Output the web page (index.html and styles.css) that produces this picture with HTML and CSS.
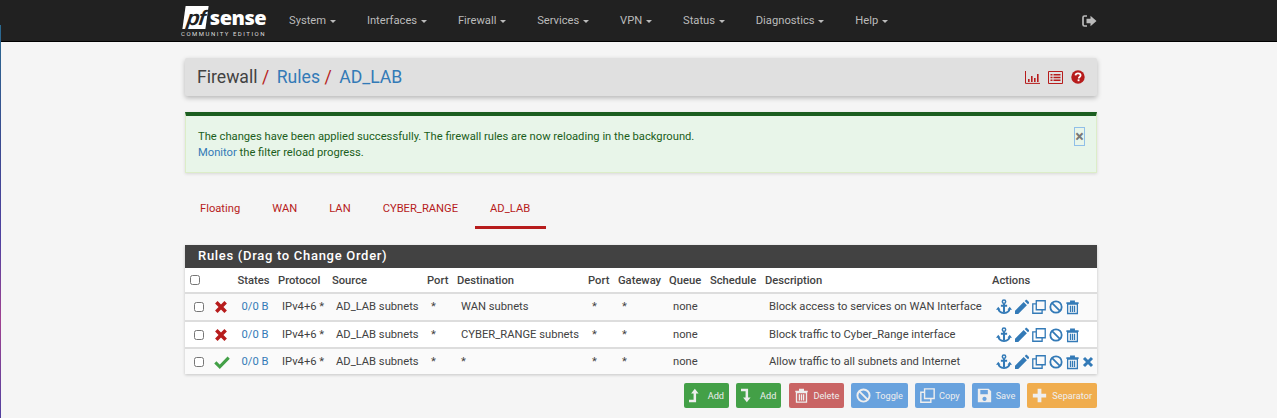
FILE: index.html
```html
<!DOCTYPE html>
<html>
<head>
    <title>pfSense - Firewall: Rules: AD_LAB</title>
    <link rel="stylesheet" href="styles.css">
</head>
<body>
<svg class="defs" width="0" height="0">
    <symbol id="i-anchor" viewBox="0 0 18 18">
        <circle cx="9" cy="3" r="1.9" fill="none" stroke="currentColor" stroke-width="1.7"/>
        <path d="M9 5v10M5.5 7.6h7" fill="none" stroke="currentColor" stroke-width="2.300"/>
        <path d="M2.6 10.6c.3 3.3 3 5 6.4 5.4 3.400-.4 6.100-2.100 6.400-5.400" fill="none" stroke="currentColor" stroke-width="2"/>
        <path d="M0 12l2.600-3.200L5 12zM13 12l2.400-3.200L18 12z" fill="currentColor"/>
    </symbol>
    <symbol id="i-pencil" viewBox="1 .5 16.500 16.500">
        <path d="M1 13.200L11.200 3l3.800 3.800L4.800 17H1zM12.400 1.800l1-1c.6-.6 1.400-.6 2 0l1.800 1.800c.6.6.6 1.400 0 2l-1 1z" fill="currentColor"/>
    </symbol>
    <symbol id="i-copy" viewBox="0 0 18 18">
        <path d="M5.500 1h11.500v11.500H5.500zM5 5H1v12h12v-4" fill="none" stroke="currentColor" stroke-width="1.700"/>
    </symbol>
    <symbol id="i-ban" viewBox="0 0 18 18">
        <circle cx="9" cy="9" r="7.300" fill="none" stroke="currentColor" stroke-width="2.300"/>
        <path d="M4 4l10 10" stroke="currentColor" stroke-width="2.300"/>
    </symbol>
    <symbol id="i-trash" viewBox="1 0 16 18">
        <path d="M1.500 3.200h4.500V1h6v2.200h4.500v2h-15z" fill="currentColor"/>
        <path d="M3 5.500h12V17H3zM6.500 7.500v7.500M9 7.500v7.500M11.500 7.500v7.500" fill="none" stroke="currentColor" stroke-width="1.600"/>
    </symbol>
    <symbol id="i-times" viewBox="0 0 18 18">
        <path d="M3 3l12 12M15 3L3 15" stroke="currentColor" stroke-width="4.500"/>
    </symbol>
    <symbol id="i-check" viewBox="0 0 18 18">
        <path d="M1.500 9.500l5 5L16.500 4" fill="none" stroke="currentColor" stroke-width="3.500"/>
    </symbol>
    <symbol id="i-save" viewBox="0 0 18 18">
        <path d="M1 1h13l3 3v13H1zM4 2.500v5h9v-5zM9 10.500a2.500 2.500 0 1 0 .01 0z" fill="currentColor" fill-rule="evenodd"/>
    </symbol>
    <symbol id="i-plus" viewBox="0 0 18 18">
        <path d="M9 1v16M1 9h16" stroke="currentColor" stroke-width="4.500"/>
    </symbol>
    <symbol id="i-up" viewBox="0 0 12 18">
        <path d="M7 1L2.500 6.500h3V14H0v3h8.500V6.500h3z" fill="currentColor"/>
    </symbol>
    <symbol id="i-down" viewBox="0 0 12 18">
        <path d="M7 17l-4.500-5.500h3V4H0V1h8.500v10.500h3z" fill="currentColor"/>
    </symbol>
</svg>

<div class="edge-strip"></div>

<nav class="navbar">
    <div class="nav-inner">
        <div class="brand">
            <div class="logo"><span class="logo-pf">pf</span><span class="logo-sense">sense</span></div>
            <div class="logo-sub">COMMUNITY EDITION</div>
        </div>
        <ul class="menu">
            <li>System <b class="caret"></b></li>
            <li>Interfaces <b class="caret"></b></li>
            <li>Firewall <b class="caret"></b></li>
            <li>Services <b class="caret"></b></li>
            <li>VPN <b class="caret"></b></li>
            <li>Status <b class="caret"></b></li>
            <li>Diagnostics <b class="caret"></b></li>
            <li>Help <b class="caret"></b></li>
        </ul>
        <svg class="logout" viewBox="0 0 15 12">
            <path d="M5 1H2.500C1.500 1 1 1.600 1 2.500v7c0 .9.500 1.500 1.500 1.500H5" fill="none" stroke="currentColor" stroke-width="1.700"/>
            <path d="M4.500 3.800H8.500V.8L14.500 6l-6 5.200v-3H4.500z" fill="currentColor"/>
        </svg>
    </div>
</nav>

<main class="page">
    <div class="page-header">
        <ol class="crumbs">
            <li>Firewall</li>
            <li class="sep">/</li>
            <li class="link">Rules</li>
            <li class="sep">/</li>
            <li class="link">AD_LAB</li>
        </ol>
        <div class="header-icons">
            <svg class="hicon" viewBox="0 0 15 13">
                <path d="M.5 0v12.400H15" fill="none" stroke="currentColor" stroke-width="1"/>
                <path d="M3 8h1.600v3H3zM6 5h1.600v6H6zM9 7h1.600v4H9zM12 3h1.600v8H12z" fill="currentColor"/>
            </svg>
            <svg class="hicon" viewBox="0 0 15 13">
                <path d="M.5.5h14v12H.5z" fill="none" stroke="currentColor" stroke-width="1"/>
                <path d="M2.500 3h2v1.400h-2zM5.500 3h7v1.400h-7zM2.500 5.800h2v1.400h-2zM5.500 5.800h7v1.400h-7zM2.500 8.600h2v1.400h-2zM5.500 8.600h7v1.400h-7z" fill="currentColor"/>
            </svg>
            <svg class="hicon help" viewBox="0 0 15 15">
                <circle cx="7.500" cy="7.500" r="7.200" fill="currentColor"/>
                <path d="M4.800 5.700c.2-1.500 1.300-2.200 2.700-2.200 1.600 0 2.800.9 2.800 2.200 0 1.900-2 1.800-2 3.300" fill="none" stroke="#fff" stroke-width="1.900"/>
                <path d="M7.100 10h2v2h-2z" fill="#fff"/>
            </svg>
        </div>
    </div>

    <div class="alert">
        <div class="alert-text">
            The changes have been applied successfully. The firewall rules are now reloading in the background.<br>
            <a class="link">Monitor</a> the filter reload progress.
        </div>
        <span class="alert-close">&times;</span>
    </div>

    <ul class="tabs">
        <li>Floating</li>
        <li>WAN</li>
        <li>LAN</li>
        <li>CYBER_RANGE</li>
        <li class="active">AD_LAB</li>
    </ul>

    <section class="panel">
        <h2 class="panel-title">Rules (Drag to Change Order)</h2>
        <table class="rules">
            <colgroup>
                <col class="c-check"><col class="c-mark"><col class="c-states"><col class="c-proto"><col class="c-src">
                <col class="c-port"><col class="c-dest"><col class="c-dport"><col class="c-gw"><col class="c-queue">
                <col class="c-sched"><col class="c-desc"><col>
            </colgroup>
            <thead>
                <tr>
                    <th><input type="checkbox"></th><th></th><th>States</th><th>Protocol</th><th>Source</th>
                    <th>Port</th><th>Destination</th><th>Port</th><th>Gateway</th><th>Queue</th>
                    <th>Schedule</th><th>Description</th><th>Actions</th>
                </tr>
            </thead>
            <tbody>
                <tr>
                    <td class="cb"><input type="checkbox"></td>
                    <td class="mark"><svg class="ic red"><use href="#i-times"/></svg></td>
                    <td><a class="link">0/0 B</a></td><td>IPv4+6 *</td><td>AD_LAB subnets</td><td>*</td>
                    <td>WAN subnets</td><td>*</td><td>*</td><td>none</td><td></td>
                    <td>Block access to services on WAN Interface</td>
                    <td class="actions">
                        <svg class="ic anchor"><use href="#i-anchor"/></svg><svg class="ic"><use href="#i-pencil"/></svg><svg class="ic"><use href="#i-copy"/></svg><svg class="ic"><use href="#i-ban"/></svg><svg class="ic trash"><use href="#i-trash"/></svg>
                    </td>
                </tr>
                <tr>
                    <td class="cb"><input type="checkbox"></td>
                    <td class="mark"><svg class="ic red"><use href="#i-times"/></svg></td>
                    <td><a class="link">0/0 B</a></td><td>IPv4+6 *</td><td>AD_LAB subnets</td><td>*</td>
                    <td>CYBER_RANGE subnets</td><td>*</td><td>*</td><td>none</td><td></td>
                    <td>Block traffic to Cyber_Range interface</td>
                    <td class="actions">
                        <svg class="ic anchor"><use href="#i-anchor"/></svg><svg class="ic"><use href="#i-pencil"/></svg><svg class="ic"><use href="#i-copy"/></svg><svg class="ic"><use href="#i-ban"/></svg><svg class="ic trash"><use href="#i-trash"/></svg>
                    </td>
                </tr>
                <tr>
                    <td class="cb"><input type="checkbox"></td>
                    <td class="mark"><svg class="ic green"><use href="#i-check"/></svg></td>
                    <td><a class="link">0/0 B</a></td><td>IPv4+6 *</td><td>AD_LAB subnets</td><td>*</td>
                    <td>*</td><td>*</td><td>*</td><td>none</td><td></td>
                    <td>Allow traffic to all subnets and Internet</td>
                    <td class="actions">
                        <svg class="ic anchor"><use href="#i-anchor"/></svg><svg class="ic"><use href="#i-pencil"/></svg><svg class="ic"><use href="#i-copy"/></svg><svg class="ic"><use href="#i-ban"/></svg><svg class="ic trash"><use href="#i-trash"/></svg><svg class="ic cross"><use href="#i-times"/></svg>
                    </td>
                </tr>
            </tbody>
        </table>
    </section>

    <div class="buttons">
        <button class="btn green-btn"><svg class="bi narrow"><use href="#i-up"/></svg>Add</button>
        <button class="btn green-btn add-last"><svg class="bi narrow"><use href="#i-down"/></svg>Add</button>
        <button class="btn red-btn"><svg class="bi"><use href="#i-trash"/></svg>Delete</button>
        <button class="btn blue-btn"><svg class="bi"><use href="#i-ban"/></svg>Toggle</button>
        <button class="btn blue-btn"><svg class="bi"><use href="#i-copy"/></svg>Copy</button>
        <button class="btn blue-btn"><svg class="bi"><use href="#i-save"/></svg>Save</button>
        <button class="btn orange-btn"><svg class="bi wide"><use href="#i-plus"/></svg>Separator</button>
    </div>
</main>
</body>
</html>
```

FILE: styles.css
```css
body {
    margin: 0;
    background-color: #f5f5f5;
    color: #424242;
    font-family: Roboto, "Liberation Sans", sans-serif;
    font-size: 11.2px;
    overflow: hidden;
}

.defs {
    display: block;
    height: 0;
}

.link {
    color: #337ab7;
}

/* sliver of the desktop behind the window */
.edge-strip {
    position: absolute;
    left: 0;
    top: 25px;
    bottom: 0;
    width: 1px;
    background: linear-gradient(#2a6a90, #3a4a90 30%, #5040a0 55%, #a04090 75%, #5040a0);
}

/* top bar */
.navbar {
    height: 41px;
    background-color: #212121;
    border-bottom: 1px solid #000;
}

.nav-inner {
    width: 912px;
    margin-left: 185px;
    display: flex;
    align-items: center;
    height: 41px;
}

.brand {
    width: 92.5px;
    margin-left: -4px;
    padding-top: 3px;
    color: #fff;
    flex-shrink: 0;
}

.logo {
    display: flex;
    align-items: center;
    height: 23px;
    line-height: 23px;
    padding-left: 3px;
}

.logo-pf {
    background-color: #fff;
    color: #212121;
    font-family: "Liberation Sans", sans-serif;
    font-size: 21px;
    font-weight: bold;
    font-style: italic;
    padding: 0 2px 0 3px;
    transform: skewX(-8deg);
    letter-spacing: -1px;
}

.logo-sense {
    font-family: "Open Sans", sans-serif;
    font-size: 20px;
    font-weight: 800;
    letter-spacing: -.5px;
    margin-left: 3px;
}

.logo-sub {
    font-size: 6px;
    letter-spacing: 1.5px;
    line-height: 9px;
    color: #ddd;
    white-space: nowrap;
}

.menu {
    display: flex;
    list-style: none;
    margin: 0;
    padding: 0;
    flex: 1;
    color: #bbb;
}

.menu li {
    padding: 0 15.5px;
    white-space: nowrap;
}

.caret {
    display: inline-block;
    width: 0;
    height: 0;
    margin-left: 1px;
    vertical-align: middle;
    border-top: 3px solid;
    border-left: 3px solid transparent;
    border-right: 3px solid transparent;
}

.logout {
    width: 15px;
    height: 12px;
    color: #bbb;
}

.page {
    width: 912px;
    margin-left: 185px;
}

/* page header */
.page-header {
    margin-top: 16px;
    height: 38px;
    background-color: #e0e0e0;
    border-radius: 2px;
    box-shadow: 0 2px 5px rgba(0, 0, 0, .26);
    display: flex;
    align-items: center;
    justify-content: space-between;
    padding: 0 12px;
}

.crumbs {
    display: flex;
    list-style: none;
    margin: 0;
    padding: 0;
    font-size: 17.6px;
    color: #424242;
}

.crumbs .sep {
    color: #b71c1c;
    margin: 0 7.5px 0 4.5px;
}

.header-icons {
    display: flex;
    align-items: center;
    gap: 8px;
}

.hicon {
    width: 15px;
    height: 13px;
    color: #b71c1c;
}

.hicon.help {
    width: 14px;
    height: 14px;
}

/* success alert */
.alert {
    margin-top: 16px;
    height: 56px;
    background-color: #e8f5e9;
    border: 1px solid #dcedc8;
    border-top: 4px solid #1b5e20;
    box-shadow: 0 1px 3px rgba(0, 0, 0, .12);
    color: #1b5e20;
    display: flex;
    justify-content: space-between;
}

.alert-text {
    padding: 13px 0 0 12px;
    line-height: 16px;
}

.alert-close {
    width: 9px;
    height: 17px;
    margin: 11px 11px 0 0;
    border: 1px solid #90bfe8;
    color: #777;
    font-size: 16px;
    font-weight: bold;
    line-height: 17px;
    text-align: center;
}

/* tabs */
.tabs {
    display: flex;
    list-style: none;
    margin: 17px 0 0;
    padding: 0;
    height: 38px;
    color: #b71c1c;
}

.tabs li {
    padding: 0 16px;
    line-height: 38px;
    height: 36px;
}

.tabs li:first-child {
    padding-left: 15px;
}

.tabs li:nth-child(4) {
    padding-right: 17px;
}

.tabs li.active {
    border-bottom: 3px solid #b71c1c;
    padding-left: 15px;
}

/* rules panel */
.panel {
    margin-top: 17px;
    background-color: #fff;
    box-shadow: 0 1px 3px rgba(0, 0, 0, .2);
}

.panel-title {
    margin: 0;
    height: 23px;
    padding-left: 13px;
    background-color: #424242;
    color: #fff;
    font-size: 13px;
    font-weight: 500;
    line-height: 22px;
    letter-spacing: .7px;
}

.rules {
    width: 100%;
    border-collapse: collapse;
    table-layout: fixed;
}

.c-check { width: 24px; }
.c-mark { width: 28.5px; }
.c-states { width: 40.5px; }
.c-proto { width: 54px; }
.c-src { width: 95px; }
.c-port { width: 30px; }
.c-dest { width: 131px; }
.c-dport { width: 30px; }
.c-gw { width: 51px; }
.c-queue { width: 41px; }
.c-sched { width: 55px; }
.c-desc { width: 227px; }

.rules th {
    height: 24px;
    padding: 0;
    text-align: left;
    font-weight: 500;
    white-space: nowrap;
}

.rules th:first-child {
    padding-left: 5px;
}

.rules td {
    height: 25px;
    padding: 0 0 0 4px;
    border-top: 2px solid #ddd;
    background-color: #fafafa;
    white-space: nowrap;
}

.rules tbody tr:first-child td {
    height: 25px;
    padding-bottom: 1px;
}

.rules tbody tr:nth-child(2) td {
    background-color: #fff;
}

.rules input {
    margin: 0;
    width: 10px;
    height: 10px;
    display: block;
}

.rules td.cb {
    padding-left: 9px;
}

.ic {
    width: 14px;
    height: 16px;
    margin-right: 3px;
    color: #337ab7;
    vertical-align: middle;
}

.ic.anchor {
    width: 16px;
}

.ic.trash {
    width: 13px;
}

.ic.cross {
    width: 12px;
    margin-right: 0;
}

.ic.red {
    color: #b71c1c;
    width: 14px;
    height: 14px;
}

.ic.green {
    color: #43a047;
    width: 16px;
    height: 16px;
}

.rules td.mark {
    padding-left: 5px;
}

/* bottom buttons */
.buttons {
    display: flex;
    justify-content: flex-end;
    gap: 7px;
    margin-top: 9px;
}

.btn {
    display: flex;
    align-items: center;
    height: 25px;
    padding: 0 4px;
    border: 1px solid transparent;
    border-radius: 2px;
    color: #eee;
    font-family: inherit;
    font-size: 9.2px;
}

.add-last {
    margin-right: 1px;
}

.bi {
    width: 15px;
    height: 15px;
    margin-right: 4px;
}

.bi.wide {
    margin-right: 5px;
}

.bi.narrow {
    width: 10px;
    margin-right: 9px;
}

.green-btn {
    background-color: #43a047;
}

.red-btn {
    background-color: #c96464;
}

.blue-btn {
    background-color: #68a2de;
}

.orange-btn {
    background-color: #f0ad4e;
}
```
